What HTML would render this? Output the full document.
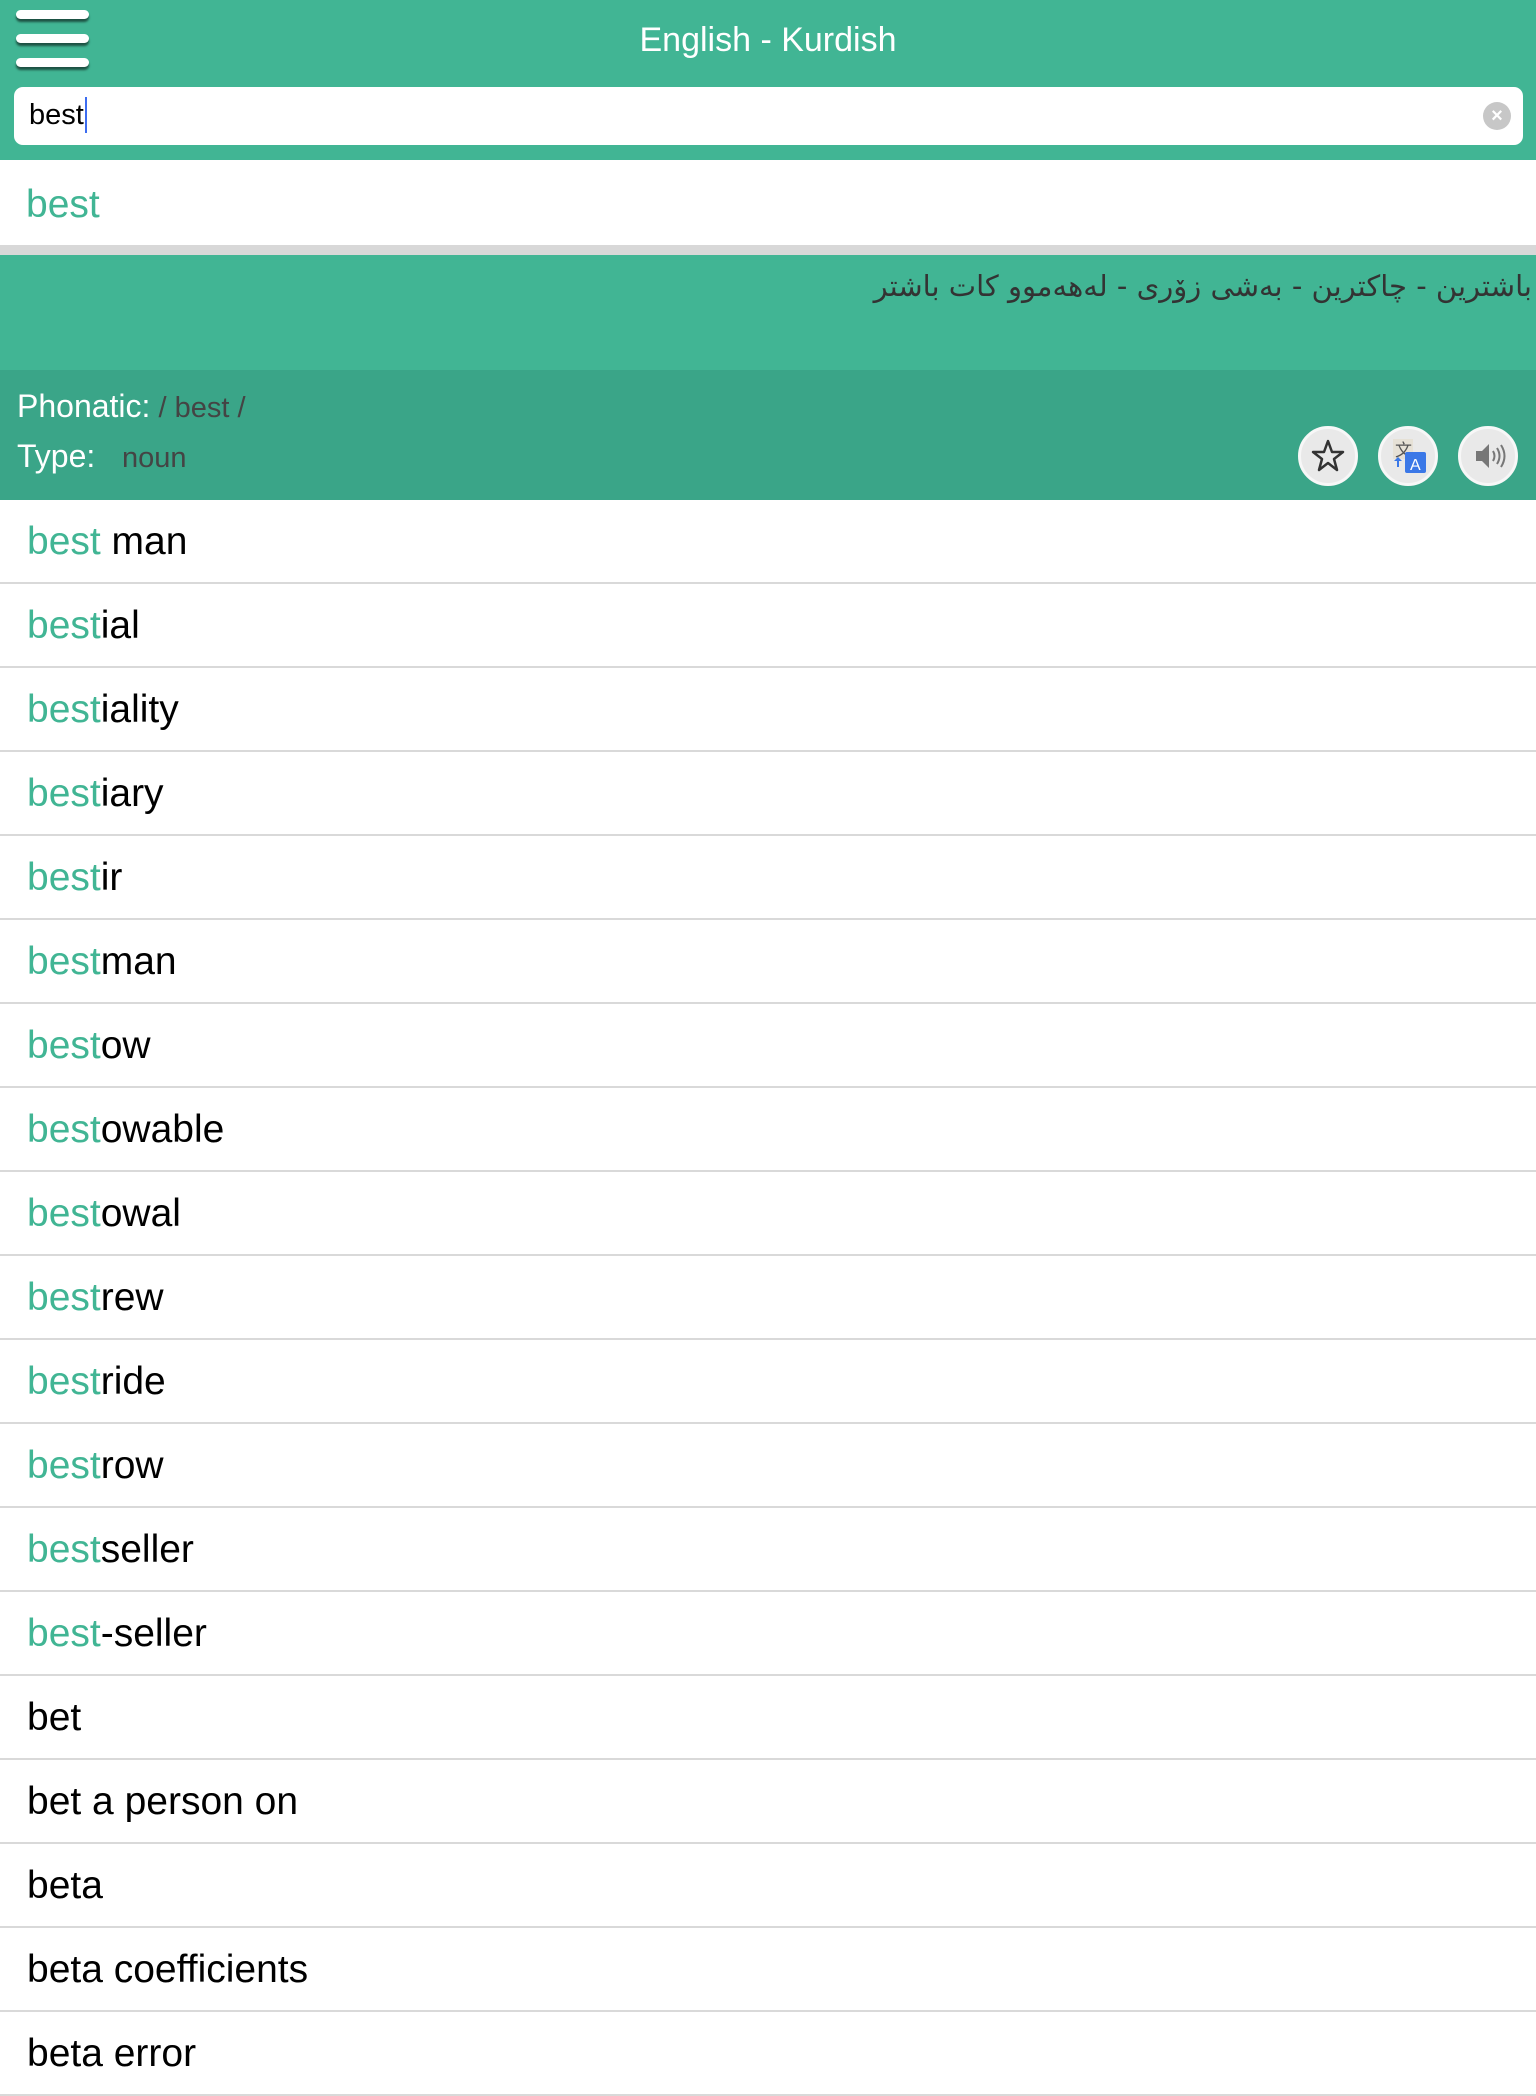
<!DOCTYPE html>
<html><head><meta charset="utf-8"><style>
*{margin:0;padding:0;box-sizing:border-box}
body{width:1536px;height:2048px;overflow:hidden;background:#fff;font-family:"Liberation Sans",sans-serif;position:relative}
.hdr{position:absolute;left:0;top:0;width:1536px;height:160px;background:#41b594}
.bar{position:absolute;left:16px;width:73px;height:9px;background:#fff;border-radius:5px;box-shadow:0 3px 2px rgba(0,0,0,.55)}
.title{position:absolute;left:0;width:1536px;top:21px;text-align:center;color:#fff;font-size:34px}
.search{position:absolute;left:14px;top:87px;width:1509px;height:58px;background:#fff;border-radius:9px}
.search span{position:absolute;left:15px;top:12px;font-size:29px;color:#000}
.cur{position:absolute;left:71px;top:10px;width:2px;height:36px;background:#3c6cf0}
.clr{position:absolute;left:1469px;top:15px;width:28px;height:28px;border-radius:50%;background:#c7c7c7;color:#fff;font-size:20px;text-align:center;line-height:28px;font-weight:bold}
.r0{position:absolute;left:0;top:160px;width:1536px;height:85px;background:#fff}
.r0 span{position:absolute;left:26px;top:23px;font-size:39px;color:#41b594}
.gray{position:absolute;left:0;top:245px;width:1536px;height:10px;background:#d8d8d8}
.def{position:absolute;left:0;top:255px;width:1536px;height:115px;background:#41b594}
.def div{position:absolute;right:4px;top:14px;font-family:"DejaVu Sans",sans-serif;font-size:29px;color:#333;direction:rtl}
.info{position:absolute;left:0;top:370px;width:1536px;height:130px;background:#3aa588}
.lbl{position:absolute;left:17px;color:#fff;font-size:32px}
.val{color:#444;font-size:29px}
.btn{position:absolute;top:426px;width:60px;height:60px;border-radius:50%;background:#e9e9e9;border:3px solid #f7f7f7}
.btn svg{position:absolute;left:0;top:0}
.row{position:absolute;left:0;width:1536px;height:84px;border-bottom:2px solid #d9d9d9}
.row>span{position:absolute;left:27px;top:20px;font-size:39px;color:#000;white-space:pre}
.row .g{color:#41b594}
</style></head><body>
<div class="hdr">
<div class="bar" style="top:10px"></div><div class="bar" style="top:34px"></div><div class="bar" style="top:58px"></div>
<div class="title">English - Kurdish</div>
<div class="search"><span>best</span><div class="cur"></div><div class="clr">×</div></div>
</div>
<div class="r0"><span>best</span></div>
<div class="gray"></div>
<div class="def"><div>باشترین - چاکترین - بەشی زۆری - لەهەموو کات باشتر</div></div>
<div class="info">
<div class="lbl" style="top:18px">Phonatic:<span class="val"> / best /</span></div>
<div class="lbl" style="top:68px">Type:&nbsp;&nbsp; <span class="val">noun</span></div>
</div>
<div class="btn" style="left:1298px"><svg width="54" height="54" viewBox="0 0 54 54"><polygon points="27,12 31,23 42,23 33,30 36,41 27,34 18,41 21,30 12,23 23,23" fill="none" stroke="#333" stroke-width="2.5" stroke-linejoin="round"/></svg></div>
<div class="btn" style="left:1378px"><svg width="54" height="54" viewBox="0 0 54 54"><rect x="12" y="10" width="20" height="20" fill="#e6e1d6"/><text x="14" y="27" font-size="17" fill="#555" font-family="Noto Sans CJK SC,sans-serif">文</text><rect x="24" y="23" width="21" height="21" rx="2" fill="#3b78e7"/><text x="29" y="41" font-size="16" fill="#fff" font-family="Liberation Sans,sans-serif">A</text><path d="M16 38v-6l-3 0 4-4 4 4-3 0v6z" fill="#3b78e7"/></svg></div>
<div class="btn" style="left:1458px"><svg width="54" height="54" viewBox="0 0 54 54"><path d="M15 22h6l7-7v24l-7-7h-6z" fill="#777"/><path d="M32 22q3 5 0 10M36 19q5 8 0 16M40 16q7 11 0 22" fill="none" stroke="#777" stroke-width="2"/></svg></div>
<div class="row" style="top:500px"><span><span class="g">best</span> man</span></div>
<div class="row" style="top:584px"><span><span class="g">best</span>ial</span></div>
<div class="row" style="top:668px"><span><span class="g">best</span>iality</span></div>
<div class="row" style="top:752px"><span><span class="g">best</span>iary</span></div>
<div class="row" style="top:836px"><span><span class="g">best</span>ir</span></div>
<div class="row" style="top:920px"><span><span class="g">best</span>man</span></div>
<div class="row" style="top:1004px"><span><span class="g">best</span>ow</span></div>
<div class="row" style="top:1088px"><span><span class="g">best</span>owable</span></div>
<div class="row" style="top:1172px"><span><span class="g">best</span>owal</span></div>
<div class="row" style="top:1256px"><span><span class="g">best</span>rew</span></div>
<div class="row" style="top:1340px"><span><span class="g">best</span>ride</span></div>
<div class="row" style="top:1424px"><span><span class="g">best</span>row</span></div>
<div class="row" style="top:1508px"><span><span class="g">best</span>seller</span></div>
<div class="row" style="top:1592px"><span><span class="g">best</span>-seller</span></div>
<div class="row" style="top:1676px"><span>bet</span></div>
<div class="row" style="top:1760px"><span>bet a person on</span></div>
<div class="row" style="top:1844px"><span>beta</span></div>
<div class="row" style="top:1928px"><span>beta coefficients</span></div>
<div class="row" style="top:2012px"><span>beta error</span></div>
</body></html>
